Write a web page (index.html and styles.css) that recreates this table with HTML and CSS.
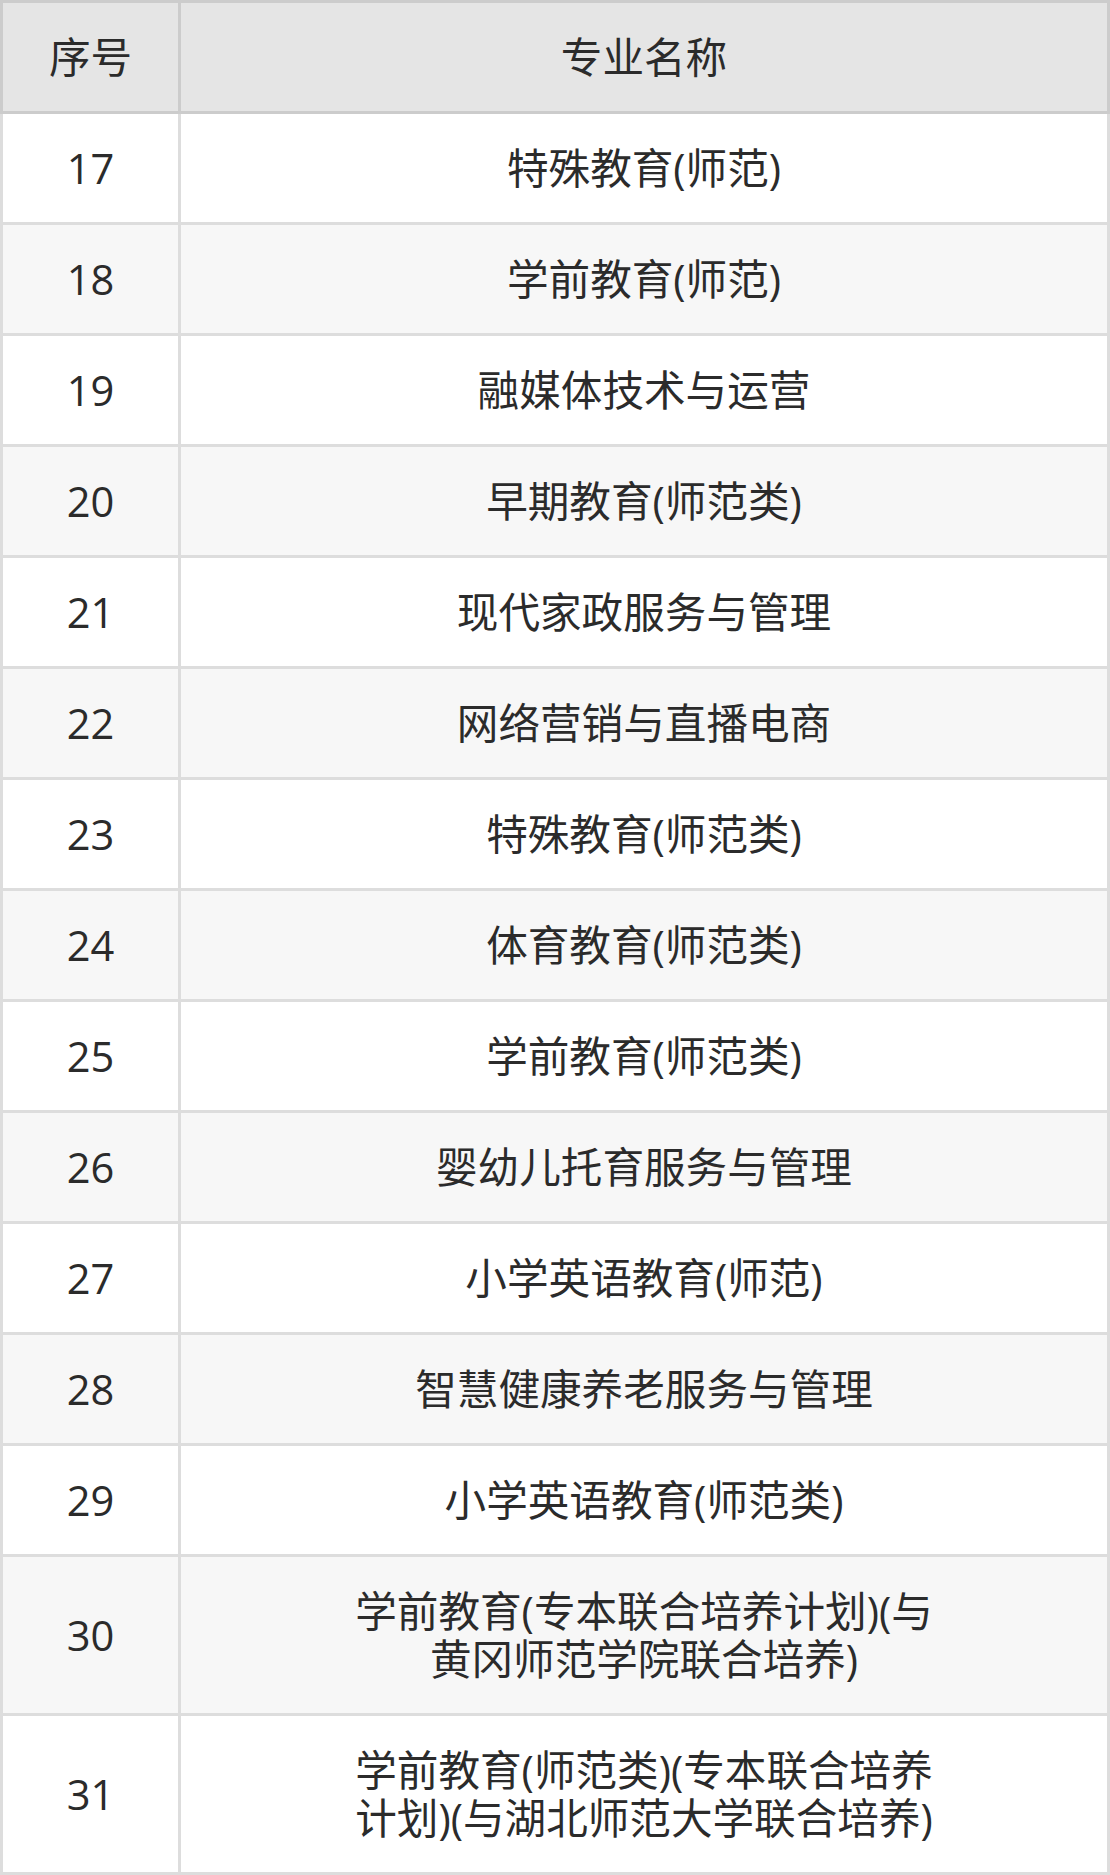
FILE: index.html
```html
<!DOCTYPE html>
<html lang="zh-CN">
<head>
<meta charset="utf-8">
<title>专业名称</title>
<link rel="stylesheet" href="styles.css">
</head>
<body>
<table class="major-table">
  <colgroup>
    <col class="col-no">
    <col class="col-name">
  </colgroup>
  <thead>
    <tr><th>序号</th><th>专业名称</th></tr>
  </thead>
  <tbody>
    <tr><td>17</td><td class="name">特殊教育(师范)</td></tr>
    <tr><td>18</td><td class="name">学前教育(师范)</td></tr>
    <tr><td>19</td><td class="name">融媒体技术与运营</td></tr>
    <tr><td>20</td><td class="name">早期教育(师范类)</td></tr>
    <tr><td>21</td><td class="name">现代家政服务与管理</td></tr>
    <tr><td>22</td><td class="name">网络营销与直播电商</td></tr>
    <tr><td>23</td><td class="name">特殊教育(师范类)</td></tr>
    <tr><td>24</td><td class="name">体育教育(师范类)</td></tr>
    <tr><td>25</td><td class="name">学前教育(师范类)</td></tr>
    <tr><td>26</td><td class="name">婴幼儿托育服务与管理</td></tr>
    <tr><td>27</td><td class="name">小学英语教育(师范)</td></tr>
    <tr><td>28</td><td class="name">智慧健康养老服务与管理</td></tr>
    <tr><td>29</td><td class="name">小学英语教育(师范类)</td></tr>
    <tr><td>30</td><td class="name">学前教育(专本联合培养计划)(与黄冈师范学院联合培养)</td></tr>
    <tr><td>31</td><td class="name">学前教育(师范类)(专本联合培养计划)(与湖北师范大学联合培养)</td></tr>
  </tbody>
</table>
</body>
</html>
```
FILE: styles.css
```css
html, body {
  margin: 0;
  padding: 0;
  background: #ffffff;
}

.major-table {
  width: 1110px;
  table-layout: fixed;
  border-collapse: collapse;
  font-family: "Open Sans", "Noto Sans CJK SC", sans-serif;
  font-size: 41.6px;
  line-height: 48px;
  color: #2b2b2b;
}

.col-no {
  width: 178px;
}

.major-table th,
.major-table td {
  padding: 30px 0;
  text-align: center;
  vertical-align: middle;
  font-weight: normal;
}

.major-table th {
  background: #e5e5e5;
  border: 3px solid #cccccc;
}

.major-table td {
  border: 3px solid #dddddd;
}

.major-table td.name {
  padding: 30px 160px;
}

.major-table tbody tr:nth-child(odd) td {
  background: #ffffff;
}

.major-table tbody tr:nth-child(even) td {
  background: #f7f7f7;
}
```
